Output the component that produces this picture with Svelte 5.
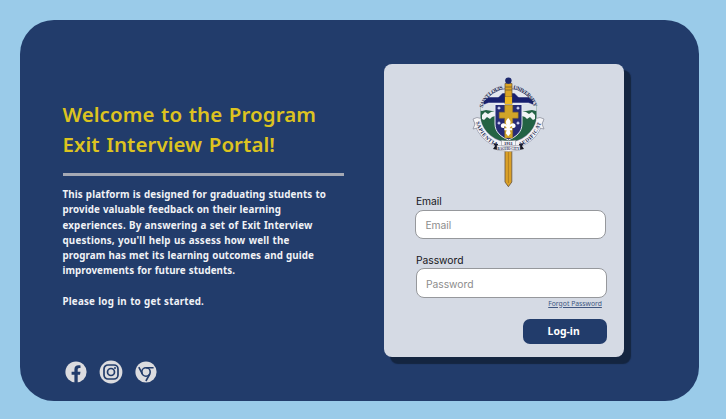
<script>
  const headline = [
    { text: 'Welcome to the Program', width: 253.5 },
    { text: 'Exit Interview Portal!', width: 212.5 }
  ];
  const intro = [
    { text: 'This platform is designed for graduating students to', width: 263.5 },
    { text: 'provide valuable feedback on their learning', width: 218.5 },
    { text: 'experiences. By answering a set of Exit Interview', width: 250 },
    { text: "questions, you'll help us assess how well the", width: 227 },
    { text: 'program has met its learning outcomes and guide', width: 251.5 },
    { text: 'improvements for future students.', width: 172.5 },
    { text: '', width: 0 },
    { text: 'Please log in to get started.', width: 141.5 }
  ];
  let email = $state('');
  let password = $state('');

  function fit(node, width) {
    const natural = node.getBoundingClientRect().width;
    if (width) node.style.letterSpacing = `${(width - natural) / node.textContent.length}px`;
  }
</script>

<main class="page">
  <div class="panel">
    <section class="welcome">
      <h1>{#each headline as line}<span use:fit={line.width}>{line.text}</span>{/each}</h1>
      <div class="rule"></div>
      <p>{#each intro as line}<span use:fit={line.width}>{line.text}</span>{/each}</p>
      <nav class="social">
        <svg width="22" height="22" viewBox="0 0 22 22" aria-label="Facebook">
          <circle cx="11" cy="11" r="10.6" fill="#dcdcdf" />
          <path d="M9.4 22v-8.3H6.6v-3h2.8V8.5c0-2.8 1.6-4.2 4.1-4.2 1.1 0 2 .2 2 .2v2.6h-1.2c-1.3 0-1.6.8-1.6 1.6v2h2.8l-.5 3h-2.3V22z" fill="#223c6b" />
        </svg>
        <svg width="24" height="24" viewBox="0 0 24 24" aria-label="Instagram">
          <circle cx="12" cy="12" r="11.4" fill="#dcdcdf" />
          <g fill="none" stroke="#223c6b" stroke-width="1.7">
            <rect x="5" y="5" width="14" height="14" rx="4" />
            <circle cx="12" cy="12" r="3.5" />
          </g>
          <circle cx="16" cy="8" r="1" fill="#223c6b" />
        </svg>
        <svg width="22" height="22" viewBox="0 0 22 22" aria-label="Chrome">
          <circle cx="11" cy="11" r="10.6" fill="#dcdcdf" />
          <g fill="none" stroke="#223c6b" stroke-width="1.6">
            <circle cx="11" cy="11" r="4.2" />
            <path d="M3.8 6.2l3.5 6.7M11 6.8h7.6M14.8 13l-3.9 7" />
          </g>
        </svg>
      </nav>
    </section>

    <section class="card">
      <svg class="crest" width="80" height="114" viewBox="0 0 80 114" aria-label="Saint Louis University">
        <defs>
          <path id="arc-saint" d="M14.6 32A27 27 0 0 1 36 12.9" />
          <path id="arc-university" d="M45 12.9A27 27 0 0 1 66.4 32" />
          <path id="arc-sapientia" d="M7.9 46A33.6 33.6 0 0 0 29.6 70.2" />
          <path id="arc-aedificat" d="M51.4 70.2A33.6 33.6 0 0 0 73.1 46" />
          <clipPath id="field"><path d="M12.5 28h56v14c0 15-12 28-28 28s-28-13-28-28z" /></clipPath>
        </defs>
        <path d="M14.5 32A27 27 0 0 1 66.5 32" fill="#e3e6ee" stroke="#464b79" stroke-width=".7" />
        <g clip-path="url(#field)">
          <path d="M10 26h62v46H10z" fill="#246344" />
          <path d="M10 28h62v6l-4 1-4-1-6 1H24l-6-1-4 1-4-1z" fill="#dde2e9" />
          <path d="M14 39l3-3 3 2 3-2 4-1v5l-3 1-2 2-3-2-3 3-2-1zM67 39l-3-3-3 2-3-2-4-1v5l3 1 2 2 3-2 3 3 2-1z" fill="#f1f4f4" />
        </g>
        <g fill="none">
          <path d="M9.2 44A32 32 0 0 0 71.8 44" stroke="#8489a0" stroke-width="7.4" />
          <path d="M9.2 44A32 32 0 0 0 71.8 44" stroke="#f1f2f6" stroke-width="6.4" />
        </g>
        <path d="M13 42.5l-4-1-4 1.5 2 5-2 5 4.5-1M68 42.5l4-1 4 1.5-2 5 2 5-4.5-1" fill="#f4f4f7" stroke="#858895" stroke-width=".7" />
        <path d="M15.5 29v-4l5-4h10l4-4h12l4 4h10l5 4v4l-5-2h-40z" fill="#18206f" stroke="#eff0f4" stroke-width=".5" />
        <path d="M27 28.5h27V48c0 8-6 13-13.5 16C33 61 27 56 27 48z" fill="#252b76" stroke="#e8eaf4" stroke-width="1" />
        <path d="M36.7 29h8v7.2h5.5v6h-5.5V62h-8V42.2h-5.5v-6h5.5z" fill="#d1a528" stroke="#916f26" stroke-width=".5" />
        <path d="M37 7.5h7V28h-7z" fill="#dda425" stroke="#64502f" stroke-width=".7" />
        <path d="M37 11h7m-7 3h7m-7 7h7" stroke="#765b27" stroke-width=".8" />
        <circle cx="40.4" cy="4.6" r="3.2" fill="#1d286d" />
        <path d="M37 21h7v7h-7z" fill="#eeb721" />
        <path d="M40.2 42c-3 3-3 5-.9 8-2-4-6.5-3.5-6.5-.2 0 2 1.7 2.7 3.6 2-1-2 1.4-2 2.3.4h-2.4v2h2.4l-1 3 2.5 3 2.5-3-1-3h2.4v-2h-2.4c.9-2.4 3.3-2.4 2.3-.4 1.9.7 3.6 0 3.6-2 0-3.3-4.5-3.8-6.5.2 2.1-3 2.1-5-.9-8z" fill="#fff" />
        <g fill="#e8ebff">
          <path d="M31 30l.7 1.4 1.4.6-1.4.7L31 34l-.7-1.3-1.4-.7 1.4-.6zM50 30l.7 1.4 1.4.6-1.4.7L50 34l-.7-1.3-1.4-.7 1.4-.6zM31 45l.7 1.4 1.4.6-1.4.7L31 49l-.7-1.3-1.4-.7 1.4-.6zM50 45l.7 1.4 1.4.6-1.4.7L50 49l-.7-1.3-1.4-.7 1.4-.6z" />
        </g>
        <path d="M37 72h6.8v34l-3.4 4.7-3.4-4.7z" fill="#dba128" stroke="#65513b" stroke-width=".8" />
        <path d="M40.4 76v31" stroke="#a7771f" stroke-width=".8" />
        <path d="M25 67l5 1v6l-5-1 2-3zM56 67l-5 1v6l5-1-2-3z" fill="#171721" />
        <path d="M29 69.3q11.4 2.5 23 0v4.7q-11.6 3-23 0z" fill="#f4f4f7" stroke="#81838f" stroke-width=".5" />
        <path d="M33.5 64.2q7 1 14 0v5.3q-7 1-14 0z" fill="#f4f4f7" stroke="#81838f" stroke-width=".5" />
        <g class="seal-text">
          <text><textPath href="#arc-saint" textLength="29">SAINT LOUIS</textPath></text>
          <text><textPath href="#arc-university" textLength="29">UNIVERSITY</textPath></text>
          <text><textPath href="#arc-sapientia" textLength="33">SAPIENTIA</textPath></text>
          <text><textPath href="#arc-aedificat" textLength="33">AEDIFICAT</textPath></text>
          <text class="year" x="40.4" y="68.7" text-anchor="middle">1911</text>
          <text class="city" x="40.4" y="74" text-anchor="middle">BAGUIO CITY</text>
        </g>
      </svg>
      <form onsubmit={(event) => event.preventDefault()}>
        <label for="email">Email</label>
        <input id="email" type="email" placeholder="Email" bind:value={email} />
        <label class="second" for="password">Password</label>
        <input class="shifted" id="password" type="password" placeholder="Password" bind:value={password} />
        <a href="#forgot">Forgot Password</a>
        <button type="submit">Log-in</button>
      </form>
    </section>
  </div>
</main>

<style>
  :global(body) { margin: 0; }
  * { box-sizing: border-box; }
  .page {
    width: 726px;
    height: 419px;
    padding: 19.5px 27px 18px 20px;
    background: #9acbe9;
    font-family: "Noto Sans", sans-serif;
  }
  .panel {
    display: flex;
    height: 381.5px;
    padding: 44.3px 0 0 42.5px;
    border-radius: 34px;
    background: #223c6b;
  }
  .welcome { width: 321.7px; flex: none; padding-top: 35px; }
  h1 {
    display: flex;
    flex-direction: column;
    align-items: flex-start;
    margin: 0;
    color: #ddc320;
    font-size: 20.5px;
    line-height: 30.5px;
    font-weight: 650;
    word-spacing: 1.2px;
    white-space: pre;
  }
  .rule { width: 281px; height: 3.5px; margin: 13px 0 10.8px; background: #a5a9b4; }
  p {
    display: flex;
    flex-direction: column;
    align-items: flex-start;
    margin: 0;
    color: #f0f2f6;
    font-size: 9.8px;
    line-height: 15.25px;
    font-weight: 700;
    word-spacing: .5px;
    white-space: pre;
  }
  p span { min-height: 15.25px; }
  .social { display: flex; align-items: center; gap: 12.3px; margin: 51.3px 0 0 2.2px; }
  .card {
    width: 239.8px;
    height: 293px;
    padding: 12px 0 0 31.2px;
    border-radius: 8px;
    background: #d5dae4;
    box-shadow: 6.5px 6.5px 1px #142540;
  }
  .crest { display: block; margin-left: 53px; }
  .seal-text { fill: #20264f; font: 700 5.3px "Liberation Serif", serif; }
  .year { font-size: 4.6px; }
  .city { font-size: 3.2px; }
  form { display: flex; flex-direction: column; width: 191.5px; font-family: Inter, sans-serif; }
  label { height: 20px; padding-left: .5px; color: #15171b; font-size: 10.3px; line-height: 23px; }
  input {
    width: 191px;
    height: 29.5px;
    padding: 1px 9px 0;
    border: 1px solid #96989c;
    border-radius: 8px;
    background: #fff;
    font: 10.3px Inter, sans-serif;
  }
  input::placeholder { color: #8c8c8c; }
  .second { margin-top: 9px; line-height: 25px; }
  .shifted { margin-left: .5px; }
  a { align-self: flex-end; margin: 1px 5px 0 0; color: #405681; font: 6.8px/9px "Noto Sans", sans-serif; }
  button {
    align-self: flex-end;
    width: 83.5px;
    height: 25px;
    margin-top: 11px;
    padding: 0 3px 0 0;
    border: 0;
    border-radius: 7px;
    background: #223c6b;
    color: #fff;
    font: 700 10.4px "Noto Sans", sans-serif;
  }
</style>
